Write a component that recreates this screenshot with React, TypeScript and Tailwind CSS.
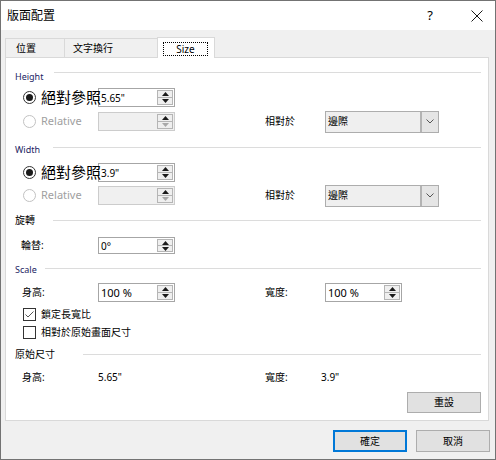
import React from "react";

const ui = "font-['Noto_Sans','Noto_Sans_CJK_TC',sans-serif]";

function Tri({ down, dim }: { down?: boolean; dim?: boolean }) {
  return (
    <svg width="7" height="4" viewBox="0 0 7 4">
      <path d={down ? "M0 0h7L3.5 4z" : "M3.5 0L7 4H0z"} fill={dim ? "#a9a9a9" : "#1a1a1a"} />
    </svg>
  );
}

function Spinner({
  value,
  disabled,
  short,
  big,
}: {
  value: string;
  disabled?: boolean;
  short?: boolean;
  big?: boolean;
}) {
  return (
    <div
      className={`flex w-[77px] shrink-0 border ${short ? "h-[17px]" : "h-[19px]"} ${
        disabled ? "border-[#cccccc] bg-[#f0f0f0]" : "border-[#a6a6a6] bg-white"
      }`}
    >
      <div className={`flex flex-1 items-center pl-[2px] leading-none ${big ? "text-[11px]" : "text-[10px]"}`}>
        {value}
      </div>
      <div className="flex w-[17px] flex-col py-px pr-px">
        <div className="flex flex-1 items-center justify-center border border-[#b5b5b5] bg-[#efefef]">
          <Tri />
        </div>
        <div className="flex flex-1 items-center justify-center border border-t-0 border-[#b5b5b5] bg-[#efefef]">
          <Tri down dim={disabled} />
        </div>
      </div>
    </div>
  );
}

function Radio({ checked, disabled }: { checked?: boolean; disabled?: boolean }) {
  return (
    <span
      className={`flex h-[13px] w-[13px] shrink-0 items-center justify-center rounded-full border bg-white ${
        disabled ? "border-[#c2c2c2]" : "border-[#333333]"
      }`}
    >
      {checked && <span className="h-[7px] w-[7px] rounded-full bg-[#1a1a1a]" />}
    </span>
  );
}

function Check({ checked }: { checked?: boolean }) {
  return (
    <span className="flex h-[13px] w-[13px] shrink-0 items-center justify-center border border-[#333333] bg-white">
      {checked && (
        <svg width="11" height="11" viewBox="0 0 11 11">
          <path d="M1.5 5.5L4 8L9.5 2.5" fill="none" stroke="#555555" strokeWidth="1" />
        </svg>
      )}
    </span>
  );
}

function Select() {
  return (
    <div className="flex h-[22px] w-[114px] shrink-0 border border-[#adadad] bg-[#efefef]">
      <span className="flex flex-1 items-center pl-[2px] text-[10px]">邊際</span>
      <span className="flex w-[18px] items-center justify-center border-l-2 border-[#b3b3b3] bg-[#e5e5e5]">
        <svg width="8" height="5" viewBox="0 0 8 5">
          <path d="M0.5 0.5L4 4L7.5 0.5" fill="none" stroke="#555555" />
        </svg>
      </span>
    </div>
  );
}

function Header({
  title,
  latin,
  textW,
  lineMt,
  mt,
}: {
  title: string;
  latin?: boolean;
  textW: string;
  lineMt: string;
  mt: string;
}) {
  return (
    <div className={`${mt} flex h-[16px] shrink-0 items-start pl-[9px] pr-[7px]`}>
      <span
        className={`${textW} shrink-0 whitespace-nowrap leading-[16px] ${
          latin ? "text-[9px] text-[#1b2463]" : "text-[10px]"
        }`}
      >
        {title}
      </span>
      <div className={`${lineMt} h-px flex-1 bg-[#dcdcdc]`} />
    </div>
  );
}

export default function App() {
  return (
    <div className={`flex h-[460px] w-[496px] flex-col border border-[#737373] bg-[#f0f0f0] text-black ${ui}`}>
      {/* title bar */}
      <div className="flex h-[29px] shrink-0 items-center bg-white pl-[6px] pr-[12px]">
        <span className="text-[12px] leading-none">版面配置</span>
        <span className="ml-auto text-[13px] leading-none">?</span>
        <svg className="ml-[38px]" width="12" height="12" viewBox="0 0 12 12">
          <path d="M0.5 0.5l11 11M11.5 0.5l-11 11" stroke="#1a1a1a" strokeWidth="1" />
        </svg>
      </div>

      <div className="flex flex-1 flex-col pt-[7px]">
        {/* tabs */}
        <div className="flex h-[20px] shrink-0 items-start pl-[4px]">
          <div className="mt-px flex h-[19px] w-[59px] items-center border-l border-t border-[#d9d9d9] pl-[10px] text-[10px]">
            位置
          </div>
          <div className="mt-px flex h-[19px] w-[93px] items-center border-l border-t border-[#d9d9d9] pl-[8px] text-[10px]">
            文字換行
          </div>
          <div className="relative z-10 flex h-[21px] w-[58px] items-start border-x border-t border-[#d9d9d9] bg-white pl-[5px] pt-[4px]">
            <span className="flex h-[14px] w-[45px] items-center justify-center border border-dotted border-black text-[10px] leading-none">
              Size
            </span>
          </div>
        </div>

        {/* panel */}
        <div className="ml-[4px] flex h-[364px] w-[484px] shrink-0 flex-col border border-[#d9d9d9] bg-white">
          <Header title="Height" latin textW="w-[39px]" lineMt="mt-[3px]" mt="mt-[11px]" />
          <div className="mt-[3px] flex h-[19px] shrink-0 items-center pl-[17px]">
            <Radio checked />
            <span className="relative z-10 ml-[5px] w-[57px] shrink-0 whitespace-nowrap text-[15px] leading-none">
              絕對參照
            </span>
            <Spinner value={'5.65"'} />
          </div>
          <div className="mt-[5px] flex h-[19px] shrink-0 items-center pl-[17px]">
            <Radio disabled />
            <span className="ml-[5px] w-[57px] shrink-0 text-[11px] text-[#a0a0a0]">Relative</span>
            <Spinner value="" disabled />
            <span className="ml-[90px] w-[60px] shrink-0 text-[10px]">相對於</span>
            <Select />
          </div>

          <Header title="Width" latin textW="w-[38px]" lineMt="mt-[5px]" mt="mt-[11px]" />
          <div className="mt-[5px] flex h-[19px] shrink-0 items-center pl-[17px]">
            <Radio checked />
            <span className="relative z-10 ml-[5px] w-[57px] shrink-0 whitespace-nowrap text-[15px] leading-none">
              絕對參照
            </span>
            <Spinner value={'3.9"'} />
          </div>
          <div className="mt-[4px] flex h-[19px] shrink-0 items-center pl-[17px]">
            <Radio disabled />
            <span className="ml-[5px] w-[57px] shrink-0 text-[11px] text-[#a0a0a0]">Relative</span>
            <Spinner value="" disabled />
            <span className="ml-[90px] w-[60px] shrink-0 text-[10px]">相對於</span>
            <Select />
          </div>

          <Header title="旋轉" textW="w-[38px]" lineMt="mt-[8px]" mt="mt-[7px]" />
          <div className="mt-[9px] flex h-[17px] shrink-0 items-center pl-[15px]">
            <span className="w-[77px] shrink-0 text-[10px]">輪替:</span>
            <Spinner value="0°" short />
          </div>

          <Header title="Scale" latin textW="w-[30px]" lineMt="mt-[6px]" mt="mt-[8px]" />
          <div className="mt-[5px] flex h-[19px] shrink-0 items-center pl-[16px]">
            <span className="w-[76px] shrink-0 text-[10px]">身高:</span>
            <Spinner value="100 %" big />
            <span className="ml-[90px] w-[60px] shrink-0 text-[10px]">寬度:</span>
            <Spinner value="100 %" big />
          </div>
          <div className="mt-[4px] flex h-[16px] shrink-0 items-center pl-[17px]">
            <Check checked />
            <span className="ml-[5px] text-[10px]">鎖定長寬比</span>
          </div>
          <div className="mt-[2px] flex h-[16px] shrink-0 items-center pl-[17px]">
            <Check />
            <span className="ml-[5px] text-[10px]">相對於原始畫面尺寸</span>
          </div>

          <Header title="原始尺寸" textW="w-[68px]" lineMt="mt-[8px]" mt="mt-[6px]" />
          <div className="mt-[7px] flex h-[16px] shrink-0 items-center pl-[16px] text-[10px]">
            <span className="w-[76px] shrink-0">身高:</span>
            <span className="w-[167px] shrink-0">5.65"</span>
            <span className="w-[56px] shrink-0">寬度:</span>
            <span>3.9"</span>
          </div>
          <div className="mt-[7px] flex shrink-0 justify-end pr-[7px]">
            <button className="h-[21px] w-[74px] border border-[#adadad] bg-[#e1e1e1] text-[10px]">重設</button>
          </div>
        </div>

        {/* dialog buttons */}
        <div className="mt-[9px] flex shrink-0 justify-end gap-[9px] pr-[5px]">
          <button className="h-[22px] w-[74px] border-2 border-[#0078d7] bg-[#e1e1e1] text-[10px]">確定</button>
          <button className="h-[22px] w-[74px] border border-[#adadad] bg-[#e1e1e1] text-[10px]">取消</button>
        </div>
      </div>
    </div>
  );
}
